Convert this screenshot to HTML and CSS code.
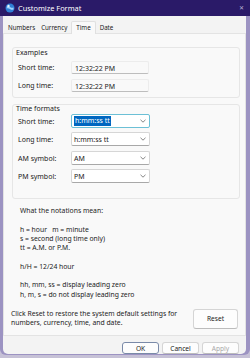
FILE: index.html
```html
<!DOCTYPE html>
<html>
<head>
    <title>Customize Format</title>
    <link rel="stylesheet" href="styles.css">
</head>
<body>
    <div class="window">
        <!-- Title bar -->
        <div class="titlebar">
            <svg class="app-icon" width="10" height="10" viewBox="0 0 10 10">
                <circle cx="5" cy="5" r="4.5" fill="#2f7fd6"/>
                <path d="M2 3.5 C4 2 6 6 8.5 4.5 L8.5 6.5 C6 8 4 4 1.5 5.5 Z" fill="#9fd3ff"/>
                <circle cx="3.5" cy="3" r="1.2" fill="#e6f3ff"/>
            </svg>
            <span class="title">Customize Format</span>
            <span class="close">&#x2715;</span>
        </div>

        <div class="content">
            <!-- Tabs -->
            <div class="tabs">
                <span class="tab">Numbers</span>
                <span class="tab">Currency</span>
                <span class="tab active">Time</span>
                <span class="tab">Date</span>
            </div>

            <div class="panel">
                <!-- Examples -->
                <div class="group examples">
                    <div class="group-label">Examples</div>
                    <div class="row">
                        <span class="label">Short time:</span>
                        <span class="readout">12:32:22 PM</span>
                    </div>
                    <div class="row">
                        <span class="label">Long time:</span>
                        <span class="readout">12:32:22 PM</span>
                    </div>
                </div>

                <!-- Time formats -->
                <div class="group formats">
                    <div class="group-label">Time formats</div>
                    <div class="row">
                        <span class="label">Short time:</span>
                        <span class="combo focused"><span class="sel">h:mm:ss tt</span><svg class="chev" width="6" height="4" viewBox="0 0 6 4"><path d="M0.5 0.8 L3 3.2 L5.5 0.8" fill="none" stroke="#666" stroke-width="0.8"/></svg></span>
                    </div>
                    <div class="row">
                        <span class="label">Long time:</span>
                        <span class="combo"><span>h:mm:ss tt</span><svg class="chev" width="6" height="4" viewBox="0 0 6 4"><path d="M0.5 0.8 L3 3.2 L5.5 0.8" fill="none" stroke="#666" stroke-width="0.8"/></svg></span>
                    </div>
                    <div class="row gap">
                        <span class="label">AM symbol:</span>
                        <span class="combo"><span>AM</span><svg class="chev" width="6" height="4" viewBox="0 0 6 4"><path d="M0.5 0.8 L3 3.2 L5.5 0.8" fill="none" stroke="#666" stroke-width="0.8"/></svg></span>
                    </div>
                    <div class="row">
                        <span class="label">PM symbol:</span>
                        <span class="combo"><span>PM</span><svg class="chev" width="6" height="4" viewBox="0 0 6 4"><path d="M0.5 0.8 L3 3.2 L5.5 0.8" fill="none" stroke="#666" stroke-width="0.8"/></svg></span>
                    </div>
                </div>

                <!-- Notations -->
                <div class="notes">
                    <p>What the notations mean:</p>
                    <p>&nbsp;</p>
                    <p>h = hour &nbsp; m = minute</p>
                    <p>s = second (long time only)</p>
                    <p>tt = A.M. or P.M.</p>
                    <p>&nbsp;</p>
                    <p>h/H = 12/24 hour</p>
                    <p>&nbsp;</p>
                    <p>hh, mm, ss = display leading zero</p>
                    <p>h, m, s = do not display leading zero</p>
                </div>

                <div class="reset-row">
                    <p>Click Reset to restore the system default settings for numbers, currency, time, and date.</p>
                    <button class="btn reset">Reset</button>
                </div>
            </div>

            <!-- Dialog buttons -->
            <div class="footer">
                <button class="btn default">OK</button>
                <button class="btn">Cancel</button>
                <button class="btn disabled">Apply</button>
            </div>
        </div>
    </div>
</body>
</html>
```

FILE: styles.css
```css
body {
    margin: 0;
    padding: 0;
    background-color: #c6c1d6;
    font-family: 'Noto Sans', 'Open Sans', sans-serif;
    color: #1b1b1b;
}

.window {
    width: 250px;
    height: 355px;
    background-color: #9c93c2; /* bordure violette de la fenetre */
    border-radius: 0 0 6px 6px;
    overflow: hidden;
}

.titlebar {
    height: 16px;
    background-color: #2a1a68;
    display: flex;
    align-items: center;
    padding-left: 5px;
    color: #ffffff;
}

.app-icon {
    margin-right: 3px;
}

.title {
    font-size: 7.4px;
}

.close {
    margin-left: auto;
    margin-right: 6px;
    font-size: 6px;
    color: #b9b3d4;
}

.content {
    margin: 0 4px 0 3px;
    height: 338px;
    background-color: #f3f3f3;
    border-radius: 0 0 5px 5px;
}

.tabs {
    height: 17px;
    display: flex;
    align-items: flex-end;
    padding-left: 2px;
}

.tab {
    font-size: 6.2px;
    padding: 0 3px;
    height: 11px;
    line-height: 11px;
    margin-right: 0;
}

.tab.active {
    background-color: #f9f9f9;
    border: 1px solid #e0e0e0;
    border-bottom: none;
    border-radius: 2px 2px 0 0;
    height: 12px;
    padding: 0 4px;
    margin: 0 1px;
    position: relative;
    top: 1px;
}

.panel {
    height: 303px;
    background-color: #f9f9f9;
    border: 1px solid #e3e3e3;
    box-sizing: border-box;
    padding: 13px 5px 0 8px;
}

.group {
    border: 1px solid #e6e6e6;
    border-radius: 3px;
    font-size: 7px;
}

.group-label {
    height: 10px;
    line-height: 10px;
    padding-left: 3px;
}

.examples {
    height: 51px;
    box-sizing: border-box;
}

.examples .row {
    margin-top: 3px;
    height: 13px;
    margin-bottom: 5px;
}

.row {
    display: flex;
    align-items: center;
}

.label {
    width: 53px;
    padding-left: 5px;
}

.readout {
    width: 78px;
    height: 13px;
    line-height: 13px;
    box-sizing: border-box;
    padding-left: 3px;
    border: 1px solid #ececec;
    border-bottom-color: #bdbdbd;
    border-radius: 2px;
}

.formats {
    margin-top: 6px;
    height: 95px;
    box-sizing: border-box;
}

.formats .group-label {
    height: 9px;
    line-height: 8px;
}

.formats .row {
    height: 14px;
    margin-bottom: 4px;
}

.formats .row.gap {
    margin-top: 5px;
}

.combo {
    width: 79px;
    height: 14px;
    box-sizing: border-box;
    border: 1px solid #d6d6d6;
    border-bottom-color: #a8a8a8;
    border-radius: 2px;
    background-color: #ffffff;
    display: flex;
    align-items: center;
    padding-left: 2px;
    padding-right: 3px;
}

.combo.focused {
    border-color: #6cc0d6;
}

.sel {
    background-color: #0067c0;
    color: #ffffff;
    padding: 0 1px;
    line-height: 10px;
}

.chev {
    margin-left: auto;
}

.notes {
    margin-top: 7px;
    padding-left: 8px;
    font-size: 6.8px;
}

.notes p {
    margin: 0;
    height: 9.3px;
    line-height: 9.3px;
    white-space: nowrap;
}

.reset-row {
    display: flex;
    align-items: center;
    margin-top: 10px;
    margin-left: -1px;
}

.reset-row p {
    margin: 0;
    width: 170px;
    font-size: 6.8px;
    line-height: 8.5px;
}

.btn {
    font-family: inherit;
    font-size: 6.6px;
    color: #1b1b1b;
    background-color: #fdfdfd;
    border: 1px solid #d5d5d5;
    border-bottom-color: #bcbcbc;
    border-radius: 3px;
    padding: 0;
}

.reset {
    margin-left: auto;
    margin-right: 2px;
    width: 45px;
    height: 20px;
}

.footer {
    display: flex;
    justify-content: flex-end;
    gap: 3px;
    padding: 6px 7px 0 0;
}

.footer .btn {
    width: 37px;
    height: 12px;
}

.footer .btn.default {
    border-color: #7a8aa8;
}

.footer .btn.disabled {
    color: #a8a8a8;
}
```
